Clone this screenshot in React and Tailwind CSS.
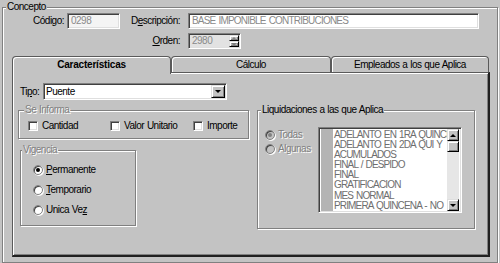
import React from 'react';

const sunken =
  'border border-t-[#808080] border-l-[#808080] border-r-white border-b-white shadow-[inset_1px_1px_0_#404040,inset_-1px_-1px_0_#dfdfdf]';
const raised =
  'border border-t-[#dfdfdf] border-l-[#dfdfdf] border-r-black border-b-black shadow-[inset_1px_1px_0_#fff,inset_-1px_-1px_0_#808080] bg-[#c3c3c3]';
const etched = 'border border-[#808080] shadow-[inset_1px_1px_0_#fff,1px_1px_0_#fff]';
const disabled = 'text-[#808080] [text-shadow:1px_1px_0_#fff]';

function Check({ label, className }) {
  return (
    <div className={`flex items-center ${className}`}>
      <span className={`w-[10px] h-[10px] bg-white ${sunken}`} />
      <span className="ml-[4px]">{label}</span>
    </div>
  );
}

function Radio({ checked, off, children }) {
  return (
    <div className="flex items-center">
      <span
        className={`w-[10px] h-[10px] rounded-full flex items-center justify-center border border-[#808080] shadow-[inset_1px_1px_0_#404040,1px_1px_0_#fff] ${
          off ? 'bg-[#c3c3c3]' : 'bg-white'
        }`}
      >
        {checked && <span className={`w-[4px] h-[4px] rounded-full ${off ? 'bg-[#808080]' : 'bg-black'}`} />}
      </span>
      <span className={`ml-[3px] ${off ? disabled : ''}`}>{children}</span>
    </div>
  );
}

function ArrowUp({ grey }) {
  return (
    <span
      className={`w-0 h-0 border-x-[3px] border-x-transparent border-b-[3px] ${grey ? 'border-b-[#808080]' : 'border-b-black'}`}
    />
  );
}

function ArrowDown({ grey }) {
  return (
    <span
      className={`w-0 h-0 border-x-[3px] border-x-transparent border-t-[3px] ${grey ? 'border-t-[#808080]' : 'border-t-black'}`}
    />
  );
}

const liquidaciones = [
  'ADELANTO EN 1RA QUINCENA',
  'ADELANTO EN 2DA QUI Y',
  'ACUMULADOS',
  'FINAL / DESPIDO',
  'FINAL',
  'GRATIFICACION',
  'MES NORMAL',
  'PRIMERA QUINCENA - NO',
];

export default function App() {
  return (
    <div className="w-[500px] h-[263px] overflow-hidden bg-[#c3c3c3] text-[10px] leading-none tracking-[-0.5px] [word-spacing:0.5px] text-black font-['Liberation_Sans',Arial,sans-serif] pt-px">
      <fieldset className={`ml-[2px] w-[496px] h-[262px] ${etched}`}>
        <legend className="ml-[3px] px-px h-[12px] leading-[12px] bg-[#c3c3c3]">Concepto</legend>

        <div className="flex items-center h-[16px]">
          <span className="w-[61px] text-right">Código:</span>
          <div className={`ml-[3px] w-[53px] h-[16px] bg-[#f4f4f4] text-[#8a8a8a] flex items-center pl-[3px] ${sunken}`}>0298</div>
          <span className="w-[60px] text-right">
            D<u>e</u>scripción:
          </span>
          <div
            className={`ml-[8px] w-[291px] h-[16px] bg-white text-[#8a8a8a] tracking-[-0.8px] [word-spacing:1px] flex items-center pl-[3px] ${sunken}`}
          >
            BASE IMPONIBLE CONTRIBUCIONES
          </div>
        </div>

        <div className="flex items-center h-[16px] mt-[4px]">
          <span className="w-[177px] text-right">
            <u>O</u>rden:
          </span>
          <div className={`ml-[8px] w-[53px] h-[16px] bg-[#e2e2e2] text-[#8a8a8a] flex items-center pl-[3px] ${sunken}`}>
            <span className="flex-1">2980</span>
            <div className="flex flex-col h-full py-[1px] pr-[1px]">
              <span className={`w-[10px] flex-1 flex items-center justify-center ${raised}`}>
                <ArrowUp grey />
              </span>
              <span className={`w-[10px] flex-1 flex items-center justify-center ${raised}`}>
                <ArrowDown grey />
              </span>
            </div>
          </div>
        </div>

        <div className="ml-[9px] mt-[7px]">
          <div className="flex items-end h-[16px]">
            <div className="relative z-10 -mb-[2px] w-[159px] h-[18px] pb-[2px] bg-[#c3c3c3] rounded-t-[4px] border border-b-0 border-[#5a5a5a] shadow-[inset_1px_1px_0_#fff] flex items-center justify-center font-bold tracking-[-0.2px]">
              Características
            </div>
            <div className="w-[160px] h-[16px] rounded-t-[4px] border border-b-0 border-[#5a5a5a] shadow-[inset_1px_1px_0_#fff] flex items-center justify-center">
              Cálculo
            </div>
            <div className="w-[158px] h-[16px] rounded-t-[4px] border border-b-0 border-[#5a5a5a] shadow-[inset_1px_1px_0_#fff] flex items-center justify-center">
              Empleados a los que Aplica
            </div>
          </div>

          <div className="w-[478px] h-[185px] border border-[#5a5a5a] border-r-2 border-b-2 border-r-[#202020] border-b-[#202020] shadow-[inset_1px_1px_0_#fff,inset_-1px_-1px_0_#808080] pl-[5px] pt-[10px]">
            <div className="flex items-center h-[17px]">
              <span className="ml-[2px] w-[23px]">
                Ti<u>p</u>o:
              </span>
              <div className={`w-[184px] h-[17px] bg-white flex items-center pl-[2px] pr-[1px] ${sunken}`}>
                <span className="flex-1">Puente</span>
                <span className={`w-[14px] h-[13px] flex items-center justify-center ${raised}`}>
                  <ArrowDown />
                </span>
              </div>
            </div>

            <div className="flex gap-[8px] mt-[4px]">
              <div className="w-[231px]">
                <fieldset className={`w-[231px] h-[35px] ${etched}`}>
                  <legend className={`ml-[5px] px-px h-[12px] leading-[12px] bg-[#c3c3c3] ${disabled}`}>Se Informa</legend>
                  <div className="flex items-center mt-[5px] pl-[9px]">
                    <Check label="Cantidad" className="w-[82px]" />
                    <Check label="Valor Unitario" className="w-[83px]" />
                    <Check label="Importe" />
                  </div>
                </fieldset>

                <fieldset className={`ml-[2px] mt-[5px] w-[116px] h-[82px] ${etched}`}>
                  <legend className={`ml-[1px] px-px h-[12px] leading-[12px] bg-[#c3c3c3] ${disabled}`}>Vigencia</legend>
                  <div className="pl-[12px] mt-[4px] flex flex-col">
                    <div className="h-[20px] flex items-center">
                      <Radio checked>
                        <u>P</u>ermanente
                      </Radio>
                    </div>
                    <div className="h-[20px] flex items-center">
                      <Radio>
                        <u>T</u>emporario
                      </Radio>
                    </div>
                    <div className="h-[20px] flex items-center">
                      <Radio>
                        Unica Ve<u>z</u>
                      </Radio>
                    </div>
                  </div>
                </fieldset>
              </div>

              <fieldset className={`w-[218px] h-[125px] ${etched}`}>
                <legend className="ml-[3px] px-px h-[12px] leading-[12px] bg-[#c3c3c3]">Liquidaciones a las que Aplica</legend>
                <div className="flex">
                  <div className="w-[60px] pl-[7px] pt-[12px] flex flex-col">
                    <div className="h-[14px] flex items-center">
                      <Radio checked off>
                        Todas
                      </Radio>
                    </div>
                    <div className="h-[14px] flex items-center">
                      <Radio off>Algunas</Radio>
                    </div>
                  </div>
                  <div className={`mt-[11px] w-[144px] h-[86px] bg-white flex px-[2px] py-px ${sunken}`}>
                    <div className="w-[12px] h-full bg-[#b4b4b4]" />
                    <div className="flex-1 overflow-hidden pl-[1px] pt-px text-[#6e6e6e] leading-[10.1px] tracking-[-0.85px] [word-spacing:1px] whitespace-nowrap">
                      {liquidaciones.map((l) => (
                        <div key={l}>{l}</div>
                      ))}
                    </div>
                    <div className="w-[12px] h-full flex flex-col bg-[#e6e6e6]">
                      <span className={`h-[12px] flex items-center justify-center ${raised}`}>
                        <ArrowUp />
                      </span>
                      <span className={`h-[11px] ${raised}`} />
                      <span className="flex-1" />
                      <span className={`h-[12px] flex items-center justify-center ${raised}`}>
                        <ArrowDown />
                      </span>
                    </div>
                  </div>
                </div>
              </fieldset>
            </div>
          </div>
        </div>
      </fieldset>
    </div>
  );
}
